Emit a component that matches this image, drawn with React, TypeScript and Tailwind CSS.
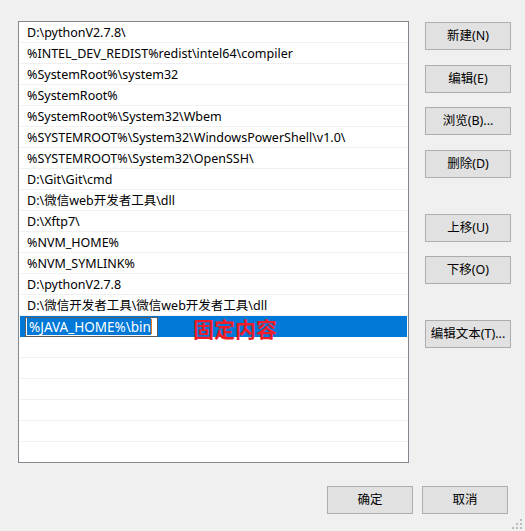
const font = "font-['Segoe_UI','Noto_Sans','Noto_Sans_CJK_SC',sans-serif]"

const paths = [
  'D:\\pythonV2.7.8\\',
  '%INTEL_DEV_REDIST%redist\\intel64\\compiler',
  '%SystemRoot%\\system32',
  '%SystemRoot%',
  '%SystemRoot%\\System32\\Wbem',
  '%SYSTEMROOT%\\System32\\WindowsPowerShell\\v1.0\\',
  '%SYSTEMROOT%\\System32\\OpenSSH\\',
  'D:\\Git\\Git\\cmd',
  'D:\\微信web开发者工具\\dll',
  'D:\\Xftp7\\',
  '%NVM_HOME%',
  '%NVM_SYMLINK%',
  'D:\\pythonV2.7.8',
  'D:\\微信开发者工具\\微信web开发者工具\\dll',
]

const Btn = ({ label, className = '' }: { label: string; className?: string }) => (
  <button
    className={`w-[86px] h-[28px] bg-[#e1e1e1] border border-[#adadad] text-[12.5px] text-black flex items-center justify-center ${className}`}
  >
    {label}
  </button>
)

export default function App() {
  return (
    <div className={`w-[525px] h-[531px] bg-[#f0f0f0] relative overflow-hidden ${font}`}>
      <div className="flex pt-[21px] pl-[18px]">
        {/* path list */}
        <div className="w-[391px] h-[442px] border border-[#828790] bg-white px-px overflow-hidden">
          {paths.map((p, i) => (
            <div
              key={i}
              className="h-[21px] border-b border-[#f0f0f0] flex items-center pl-[7px] pt-[3px] text-[12.5px] text-black whitespace-nowrap"
            >
              {p}
            </div>
          ))}
          <div className="h-[21px] bg-[#0078d7] flex items-center pl-[5px] relative">
            <div className="h-[20px] w-[133px] border border-[#5c5c5c] bg-white flex items-center px-px">
              <span className="bg-[#0078d7] text-white text-[13.5px] leading-[16px] pl-[2px] pt-px whitespace-nowrap">
                %JAVA_HOME%\bin
              </span>
              <span className="w-px h-[15px] bg-[#e07a1f]" />
            </div>
            <span className="ml-[35px] text-[21px] font-bold text-[#f01c28] leading-none font-['Noto_Sans_CJK_SC',sans-serif] translate-y-[2px]">
              固定内容
            </span>
          </div>
          {Array.from({ length: 6 }).map((_, i) => (
            <div key={i} className="h-[21px] border-b border-[#f0f0f0]" />
          ))}
        </div>

        {/* side buttons */}
        <div className="ml-[16px] pt-px flex flex-col">
          <Btn label="新建(N)" />
          <Btn label="编辑(E)" className="mt-[15px]" />
          <Btn label="浏览(B)..." className="mt-[14px]" />
          <Btn label="删除(D)" className="mt-[15px]" />
          <Btn label="上移(U)" className="mt-[36px]" />
          <Btn label="下移(O)" className="mt-[14px]" />
          <Btn label="编辑文本(T)..." className="mt-[36px]" />
        </div>
      </div>

      {/* bottom buttons */}
      <div className="flex justify-end gap-[9px] pr-[17px] mt-[23px]">
        <Btn label="确定" className="w-[85px]" />
        <Btn label="取消" className="w-[85px]" />
      </div>

      {/* size grip */}
      <svg className="absolute right-[2px] bottom-[1px]" width="11" height="11" viewBox="0 0 11 11">
        <g fill="#bcbcbc">
          <rect x="8" y="0" width="2" height="2" />
          <rect x="4" y="4" width="2" height="2" />
          <rect x="8" y="4" width="2" height="2" />
          <rect x="0" y="8" width="2" height="2" />
          <rect x="4" y="8" width="2" height="2" />
          <rect x="8" y="8" width="2" height="2" />
        </g>
      </svg>
    </div>
  )
}
